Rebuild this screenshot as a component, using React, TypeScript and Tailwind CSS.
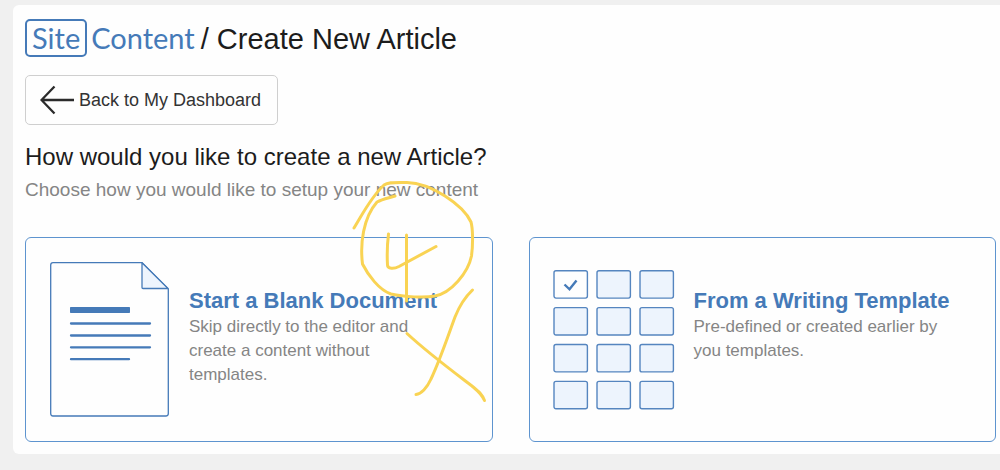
import type { ReactNode } from "react";

type OptionCardProps = {
  title: string;
  description: string;
  icon: ReactNode;
  children?: ReactNode;
};

const tileColumns = [0, 1, 2];
const tileRows = [0, 1, 2, 3];

export default function App() {
  return (
    <div className="bg-[#f0f0f0] pt-[5px] pb-4 pl-[13px] font-['Liberation_Sans',Arial,sans-serif]">
      <main className="rounded-l-md bg-[#fefefe] pt-3.5 pr-1 pb-3 pl-3">
        <header className="flex items-end gap-1.5">
          <SiteLogo />
          <h1 className="text-[29px] leading-9 text-[#1c1c1c]">/ Create New Article</h1>
        </header>

        <button
          type="button"
          className="mt-[18px] flex h-[50px] items-center gap-1 rounded-[5px] border border-[#cfcfcf] pr-4 pl-3.5 text-[18px] text-[#333]"
        >
          <BackArrow />
          Back to My Dashboard
        </button>

        <h2 className="mt-[18px] text-[24px] leading-7 text-[#1c1c1c]">
          How would you like to create a new Article?
        </h2>
        <p className="mt-[7px] text-[19px] leading-6 text-[#858585]">
          Choose how you would like to setup your new content
        </p>

        <div className="mt-[35px] grid grid-cols-2 gap-9">
          <OptionCard
            title="Start a Blank Document"
            description="Skip directly to the editor and create a content without templates."
            icon={<DocumentIcon />}
          >
            <MarkerNotes />
          </OptionCard>
          <OptionCard
            title="From a Writing Template"
            description="Pre-defined or created earlier by you templates."
            icon={<TemplateIcon />}
          />
        </div>
      </main>
    </div>
  );
}

function OptionCard({ title, description, icon, children }: OptionCardProps) {
  return (
    <a
      href="#"
      className="relative flex items-start gap-5 rounded-md border border-[#5e94cf] p-6"
    >
      {icon}
      <div className="max-w-[252px] pt-[25px]">
        <h3 className="text-[22px] leading-7 font-bold whitespace-nowrap text-[#457ab8]">{title}</h3>
        <p className="text-[17px] leading-6 text-[#858585]">{description}</p>
      </div>
      {children}
    </a>
  );
}

function SiteLogo() {
  return (
    <a
      href="#"
      className="flex items-center gap-1 font-['Lato',sans-serif] text-[29px] leading-9 text-[#457ab8]"
    >
      <span className="rounded-[5px] border-2 border-[#457ab8] px-[5px] leading-[34px]">Site</span>
      <span>Content</span>
    </a>
  );
}

function BackArrow() {
  return (
    <svg width="35" height="30" viewBox="0 0 35 30" fill="none" stroke="#2b2b2b" strokeWidth="2.3" aria-hidden="true">
      <path d="M34 15H1.5M14.5 1.5L1.5 15L14.5 28.5" />
    </svg>
  );
}

function DocumentIcon() {
  return (
    <svg width="119" height="155" viewBox="0 0 119 155" className="shrink-0" aria-hidden="true">
      <path
        d="M3 .7H92L118.3 27V151.5Q118.3 154 115.8 154H3Q.7 154 .7 151.5V3Q.7 .7 3 .7Z"
        fill="#fefefe"
        stroke="#457ab8"
        strokeWidth="1.3"
      />
      <path d="M92 .7V25.5Q92 26.5 93 26.5H118Z" fill="#edf4fd" stroke="#457ab8" strokeWidth="1.3" strokeLinejoin="round" />
      <rect x="20" y="45" width="60" height="6" rx=".7" fill="#457ab8" />
      <path
        d="M21 61.5H100M21 73.5H100M21 85.3H100M21 97.2H79"
        stroke="#457ab8"
        strokeWidth="2.3"
        strokeLinecap="round"
      />
    </svg>
  );
}

function TemplateIcon() {
  return (
    <svg width="120" height="155" viewBox="0 0 120 155" className="shrink-0 overflow-visible" aria-hidden="true">
      {tileRows.map((row) =>
        tileColumns.map((column) => (
          <rect
            key={`${row}-${column}`}
            x={column * 43}
            y={row * 36.9 + 8.7}
            width="33.4"
            height="27.4"
            rx="2"
            fill={row === 0 && column === 0 ? "#fefefe" : "#edf4fd"}
            stroke="#5585bf"
            strokeWidth="1.4"
          />
        ))
      )}
      <path d="M10.5 22.5L15.5 27.3L22.5 18.5" fill="none" stroke="#457ab8" strokeWidth="2.4" />
    </svg>
  );
}

// Freehand marker strokes drawn over the first card
function MarkerNotes() {
  return (
    <svg
      width="140"
      height="230"
      viewBox="350 175 140 230"
      fill="none"
      stroke="#f9d353"
      strokeWidth="3"
      strokeLinecap="round"
      strokeLinejoin="round"
      className="pointer-events-none absolute -top-[63px] left-[324px]"
      aria-hidden="true"
    >
      <path d="M354 228C362 215 371 197 384 185C388 182 394 182.5 407 182.5C431 183 463 205 471 222C473 229 473 245 471.5 256C468 273 451 293 435 296C425 298 404 297 391 294C379 290 368 275 362.5 264C360 244 363 218 377 202C383 199 389 198 395 196" />
      <path d="M388.5 234C387 246 387 256 387.5 265C387.5 269 394 269 399 266.5L436 246.5" />
      <path d="M406.5 235V301" />
      <path d="M472.5 290C463 299 459 307 455 317C448 336 440 360 431 379C427 388 421 394 416 394.5" />
      <path d="M407 333.5C428 353 451 370 472 386C478 391 482 394 484.5 400.5" />
    </svg>
  );
}
